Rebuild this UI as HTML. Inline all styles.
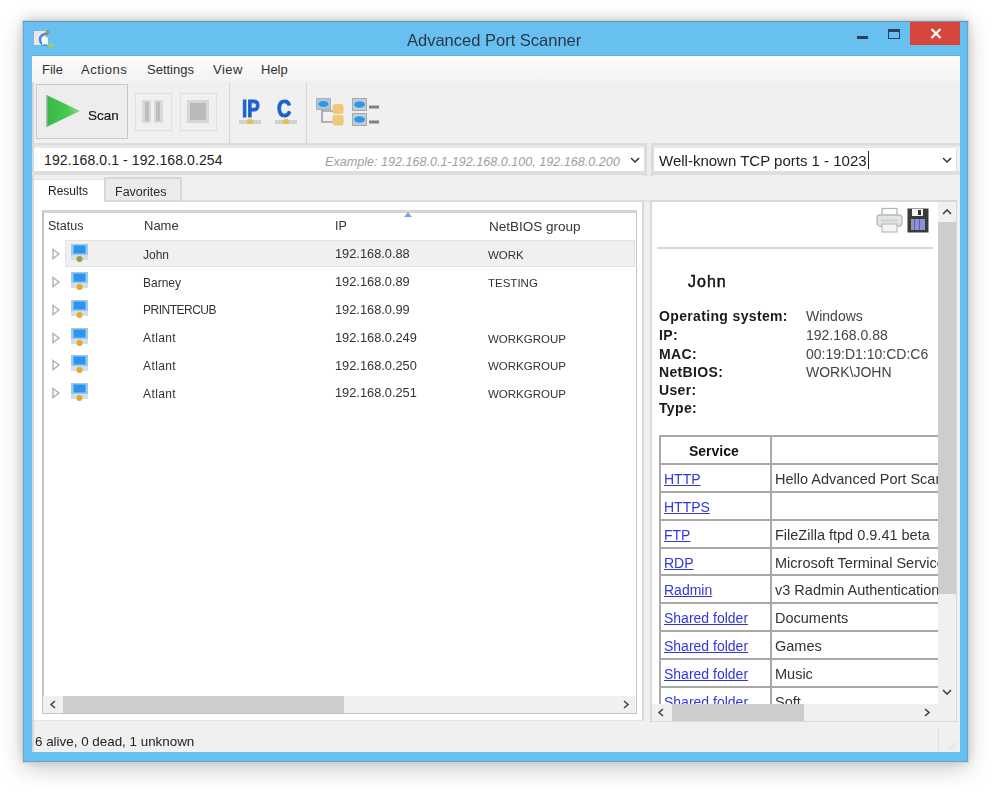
<!DOCTYPE html>
<html><head><meta charset="utf-8">
<style>
*{box-sizing:border-box;margin:0;padding:0}
html,body{width:1000px;height:794px;overflow:hidden;background:#fff;font-family:"Liberation Sans",sans-serif;color:#1e1e1e}
.a{position:absolute}
.t{position:absolute;white-space:pre;line-height:1}
#win{left:23px;top:21px;width:945px;height:741px;background:#68c0f0;box-shadow:0 0 0 1px rgba(215,205,195,0.9),0 6px 22px rgba(0,0,0,0.22),0 0 10px rgba(0,0,0,0.08),0 -4px 12px rgba(80,60,40,0.10);border:1px solid #62a6d2;border-top-color:#5a9cc8}
#client{left:32px;top:56px;width:928px;height:696px;background:#f0f0f0}
.menu{font-size:13px;color:#303030;top:63px}
.row{font-size:12px;color:#333}
.lbl{font-size:14px;font-weight:bold;color:#1a1a1a;letter-spacing:.35px}
.val{font-size:14px;color:#444}
.lnk{color:#3236e0;text-decoration:underline;font-size:14px}
.cel{font-size:14.5px;color:#333}
</style></head><body><div id="wrap" style="filter:blur(0.4px);position:absolute;left:0;top:0;width:1000px;height:794px">
<div id="win" class="a"></div>
<!-- title bar -->
<svg class="a" style="left:33px;top:28px" width="22" height="22" viewBox="0 0 22 22">
  <rect x="1" y="3" width="12" height="14" fill="#efe6ea"/>
  <path d="M15 5.5 Q7 6 7 11.5 Q7 17 14 17" stroke="#4a88da" stroke-width="2.4" fill="none"/>
  <rect x="9" y="9.5" width="6" height="7" fill="#eefdff"/>
  <circle cx="14.5" cy="4.3" r="2" fill="#a89838"/>
  <circle cx="18" cy="17" r="2.5" fill="#b4c858"/>
</svg>
<div class="t" style="left:407px;top:31.7px;font-size:16.5px;color:#283848">Advanced Port Scanner</div>
<div class="a" style="left:857px;top:36px;width:11px;height:3px;background:#2a4058"></div>
<div class="a" style="left:888px;top:29px;width:12px;height:10px;border:1.5px solid #2a4058;border-top-width:3px"></div>
<div class="a" style="left:910px;top:22px;width:50px;height:23px;background:#d7463c"></div>
<svg class="a" style="left:929px;top:27px" width="14" height="13" viewBox="0 0 14 13"><path d="M2.5 2 L11.5 11 M11.5 2 L2.5 11" stroke="#fff" stroke-width="2.2"/></svg>

<div id="client" class="a"></div>
<div class="a" style="left:32px;top:82px;width:2px;height:670px;background:#d4d8dc"></div>
<!-- menu bar -->
<div class="a" style="left:32px;top:55px;width:928px;height:1px;background:#5aaee0"></div>
<div class="a" style="left:32px;top:56px;width:928px;height:26px;background:linear-gradient(#fcfcfc,#f3f3f3)"></div>
<div class="t menu" style="left:42px">File</div>
<div class="t menu" style="left:81px;letter-spacing:.5px">Actions</div>
<div class="t menu" style="left:147px">Settings</div>
<div class="t menu" style="left:213px;letter-spacing:.5px">View</div>
<div class="t menu" style="left:261px">Help</div>

<!-- toolbar -->
<div class="a" style="left:36px;top:84px;width:92px;height:55px;background:#ededed;border:1px solid #c9c9c9"></div>
<svg class="a" style="left:46px;top:94px" width="36" height="34" viewBox="0 0 36 34"><defs><linearGradient id="gg" x1="0" x2="1"><stop offset="0" stop-color="#38b845"/><stop offset="0.6" stop-color="#48c850"/><stop offset="1" stop-color="#8ad88a"/></linearGradient></defs><path d="M1.5 1.5 L34 17 L1.5 32.5 Z" fill="url(#gg)"/><path d="M1 1 V33" stroke="#7a9a80" stroke-width="1.2"/></svg>
<div class="t" style="left:88px;top:108.5px;font-size:13.5px;color:#1a1a1a;-webkit-text-stroke:.2px #1a1a1a">Scan</div>
<div class="a" style="left:135px;top:93px;width:37px;height:38px;border:1px solid #e0e0e0"></div>
<div class="a" style="left:142px;top:100px;width:9px;height:23px;background:#bdbdbd;border:2px solid #dadada;border-left-width:3px"></div>
<div class="a" style="left:154px;top:100px;width:9px;height:23px;background:#bdbdbd;border:2px solid #dadada;border-right-width:3px"></div>
<div class="a" style="left:180px;top:93px;width:37px;height:38px;border:1px solid #e0e0e0"></div>
<div class="a" style="left:187px;top:100px;width:22px;height:23px;background:#bababa;border:3px solid #d6d6d6"></div>
<div class="a" style="left:229px;top:82px;width:1px;height:61px;background:#d6d6d6"></div>
<div class="a" style="left:306px;top:82px;width:1px;height:61px;background:#d6d6d6"></div>
<!-- IP icon -->
<div class="t" style="left:242px;top:97px;font-size:24px;font-weight:bold;color:#1a62d2;-webkit-text-stroke:1.1px #1a62d2;transform:scaleX(0.78);transform-origin:0 0">IP</div>
<div class="a" style="left:239px;top:120px;width:22px;height:4px;background:#d0d0d0"></div>
<div class="a" style="left:247px;top:119px;width:6px;height:5px;border-radius:3px;background:#e8c040"></div>
<div class="t" style="left:277px;top:97px;font-size:24px;font-weight:bold;color:#1a62d2;-webkit-text-stroke:1.1px #1a62d2;transform:scaleX(0.82);transform-origin:0 0">C</div>
<div class="a" style="left:275px;top:120px;width:22px;height:4px;background:#d0d0d0"></div>
<div class="a" style="left:283px;top:119px;width:6px;height:5px;border-radius:3px;background:#e8c040"></div>
<!-- tree icon -->
<svg class="a" style="left:315px;top:97px" width="32" height="32" viewBox="0 0 32 32">
  <rect x="1.5" y="1.5" width="14" height="11" fill="#b0c4d8" stroke="#a8b4c0" stroke-width="1"/>
  <ellipse cx="8.5" cy="7" rx="5" ry="3" fill="#2a9ae8"/>
  <path d="M7 12.5 V25 H18 M7 14 H18" stroke="#a0a0a0" stroke-width="1.6" fill="none"/>
  <rect x="17.5" y="7" width="11" height="10" rx="2.5" fill="#f0c878"/>
  <rect x="17.5" y="18" width="11" height="10.5" rx="2.5" fill="#f0c878"/>
</svg>
<!-- list icon -->
<svg class="a" style="left:351px;top:97px" width="32" height="32" viewBox="0 0 32 32">
  <rect x="1.5" y="1.5" width="14" height="12" fill="#c0ccd8" stroke="#a8a8a8" stroke-width="1"/>
  <ellipse cx="8.5" cy="7.5" rx="5.5" ry="3.2" fill="#2a9ae8"/>
  <rect x="1.5" y="16.5" width="14" height="12" fill="#c0ccd8" stroke="#a8a8a8" stroke-width="1"/>
  <ellipse cx="8.5" cy="22.5" rx="5.5" ry="3.2" fill="#2a9ae8"/>
  <rect x="18" y="8.5" width="10" height="3" fill="#808080"/>
  <rect x="18" y="23.5" width="10" height="3" fill="#808080"/>
</svg>
<div class="a" style="left:32px;top:143px;width:928px;height:3px;background:#dedede"></div>
<div class="a" style="left:32px;top:171px;width:928px;height:4px;background:#dedede"></div>
<div class="a" style="left:644px;top:143px;width:10px;height:33px;background:#ececec;border-left:3px solid #dcdcdc;border-right:3px solid #dcdcdc"></div>

<!-- address combo -->
<div class="a" style="left:34px;top:147px;width:610px;height:24px;background:#fff;border-top:1px solid #e6e6e6"></div>
<div class="t" style="left:44px;top:153px;font-size:14px;letter-spacing:.1px;color:#222">192.168.0.1 - 192.168.0.254</div>
<div class="t" style="left:325px;top:155.5px;font-size:12.6px;font-style:italic;color:#a0a0a0">Example: 192.168.0.1-192.168.0.100, 192.168.0.200</div>
<svg class="a" style="left:630px;top:157px" width="10" height="7" viewBox="0 0 10 7"><path d="M1 1 L5 5 L9 1" stroke="#333" stroke-width="1.5" fill="none"/></svg>
<!-- port combo -->
<div class="a" style="left:654px;top:147px;width:303px;height:24px;background:#fff;border-top:1px solid #e6e6e6;border-right:1px solid #e0e0e0"></div>
<div class="t" style="left:659px;top:153px;font-size:15px;color:#222">Well-known TCP ports 1 - 1023</div>
<div class="a" style="left:868px;top:151px;width:1px;height:18px;background:#222"></div>
<svg class="a" style="left:942px;top:157px" width="10" height="7" viewBox="0 0 10 7"><path d="M1 1 L5 5 L9 1" stroke="#333" stroke-width="1.5" fill="none"/></svg>

<!-- tabs -->
<div class="a" style="left:34px;top:200px;width:610px;height:521px;background:#fff;border-top:2px solid #dcdcdc;border-right:2px solid #d8d8d8;border-bottom:1px solid #e6e6e6"></div>
<div class="a" style="left:34px;top:179px;width:71px;height:23px;background:#fff;border-top:1px solid #e4e4e4"></div>
<div class="t" style="left:48px;top:185px;font-size:12px;color:#222">Results</div>
<div class="a" style="left:104px;top:177px;width:78px;height:25px;background:#ebebeb;border:2px solid #d8d8d8"></div>
<div class="t" style="left:115px;top:186px;font-size:12.5px;color:#2a2a2a">Favorites</div>

<!-- list -->
<div class="a" style="left:42px;top:210px;width:595px;height:504px;background:#fff;border:1px solid #c4c4c4;border-top:3px solid #d4d4d4;border-left:2px solid #bcc4cc"></div>
<div class="t row" style="left:48px;top:220px;font-size:12.5px">Status</div>
<div class="t row" style="left:144px;top:219px;font-size:13px">Name</div>
<div class="t row" style="left:335px;top:220px;font-size:12.5px">IP</div>
<div class="t row" style="left:489px;top:220px;font-size:13.5px">NetBIOS group</div>
<div class="a" style="left:404px;top:212px;width:8px;height:5px;background:#74a8e0;clip-path:polygon(50% 0,100% 100%,0 100%)"></div>
<!-- row highlight -->
<div class="a" style="left:65px;top:240px;width:570px;height:27px;background:#f0f0f0;border:1px solid #e2e2e2"></div>
<svg class="a" style="left:51px;top:248.2px" width="10" height="12" viewBox="0 0 10 12"><path d="M2 1.5 L8 6 L2 10.5 Z" fill="none" stroke="#b0b0b0" stroke-width="1.4"/></svg>
<svg class="a" style="left:70px;top:243.2px" width="19" height="20" viewBox="0 0 19 20"><rect x="1" y="1" width="17" height="11" fill="#9cc8ec"/><rect x="3.5" y="2.5" width="12" height="8" fill="#2a96f0"/><rect x="1" y="12" width="17" height="5" fill="#d4deea"/><circle cx="9.5" cy="16" r="3" fill="#a89a40"/></svg>
<div class="t row" style="left:143px;top:248.7px">John</div>
<div class="t row" style="left:335px;top:248.4px;font-size:12.8px">192.168.0.88</div>
<div class="t row" style="left:488px;top:250.2px;font-size:11.5px">WORK</div>
<svg class="a" style="left:51px;top:276.0px" width="10" height="12" viewBox="0 0 10 12"><path d="M2 1.5 L8 6 L2 10.5 Z" fill="none" stroke="#b0b0b0" stroke-width="1.4"/></svg>
<svg class="a" style="left:70px;top:271.0px" width="19" height="20" viewBox="0 0 19 20"><rect x="1" y="1" width="17" height="11" fill="#9cc8ec"/><rect x="3.5" y="2.5" width="12" height="8" fill="#2a96f0"/><rect x="1" y="12" width="17" height="5" fill="#d4deea"/><circle cx="9.5" cy="16" r="3" fill="#e8a828"/></svg>
<div class="t row" style="left:143px;top:276.5px">Barney</div>
<div class="t row" style="left:335px;top:276.2px;font-size:12.8px">192.168.0.89</div>
<div class="t row" style="left:488px;top:278.0px;font-size:11.5px">TESTING</div>
<svg class="a" style="left:51px;top:303.8px" width="10" height="12" viewBox="0 0 10 12"><path d="M2 1.5 L8 6 L2 10.5 Z" fill="none" stroke="#b0b0b0" stroke-width="1.4"/></svg>
<svg class="a" style="left:70px;top:298.8px" width="19" height="20" viewBox="0 0 19 20"><rect x="1" y="1" width="17" height="11" fill="#9cc8ec"/><rect x="3.5" y="2.5" width="12" height="8" fill="#2a96f0"/><rect x="1" y="12" width="17" height="5" fill="#d4deea"/><circle cx="9.5" cy="16" r="3" fill="#e8a828"/></svg>
<div class="t row" style="left:143px;top:304.3px;letter-spacing:-0.5px">PRINTERCUB</div>
<div class="t row" style="left:335px;top:304.0px;font-size:12.8px">192.168.0.99</div>
<svg class="a" style="left:51px;top:331.6px" width="10" height="12" viewBox="0 0 10 12"><path d="M2 1.5 L8 6 L2 10.5 Z" fill="none" stroke="#b0b0b0" stroke-width="1.4"/></svg>
<svg class="a" style="left:70px;top:326.6px" width="19" height="20" viewBox="0 0 19 20"><rect x="1" y="1" width="17" height="11" fill="#9cc8ec"/><rect x="3.5" y="2.5" width="12" height="8" fill="#2a96f0"/><rect x="1" y="12" width="17" height="5" fill="#d4deea"/><circle cx="9.5" cy="16" r="3" fill="#e8a828"/></svg>
<div class="t row" style="left:143px;top:332.1px;letter-spacing:0.4px">Atlant</div>
<div class="t row" style="left:335px;top:331.8px;font-size:12.8px">192.168.0.249</div>
<div class="t row" style="left:488px;top:333.6px;font-size:11.5px">WORKGROUP</div>
<svg class="a" style="left:51px;top:359.4px" width="10" height="12" viewBox="0 0 10 12"><path d="M2 1.5 L8 6 L2 10.5 Z" fill="none" stroke="#b0b0b0" stroke-width="1.4"/></svg>
<svg class="a" style="left:70px;top:354.4px" width="19" height="20" viewBox="0 0 19 20"><rect x="1" y="1" width="17" height="11" fill="#9cc8ec"/><rect x="3.5" y="2.5" width="12" height="8" fill="#2a96f0"/><rect x="1" y="12" width="17" height="5" fill="#d4deea"/><circle cx="9.5" cy="16" r="3" fill="#e8a828"/></svg>
<div class="t row" style="left:143px;top:359.9px;letter-spacing:0.4px">Atlant</div>
<div class="t row" style="left:335px;top:359.6px;font-size:12.8px">192.168.0.250</div>
<div class="t row" style="left:488px;top:361.4px;font-size:11.5px">WORKGROUP</div>
<svg class="a" style="left:51px;top:387.2px" width="10" height="12" viewBox="0 0 10 12"><path d="M2 1.5 L8 6 L2 10.5 Z" fill="none" stroke="#b0b0b0" stroke-width="1.4"/></svg>
<svg class="a" style="left:70px;top:382.2px" width="19" height="20" viewBox="0 0 19 20"><rect x="1" y="1" width="17" height="11" fill="#9cc8ec"/><rect x="3.5" y="2.5" width="12" height="8" fill="#2a96f0"/><rect x="1" y="12" width="17" height="5" fill="#d4deea"/><circle cx="9.5" cy="16" r="3" fill="#e8a828"/></svg>
<div class="t row" style="left:143px;top:387.7px;letter-spacing:0.4px">Atlant</div>
<div class="t row" style="left:335px;top:387.4px;font-size:12.8px">192.168.0.251</div>
<div class="t row" style="left:488px;top:389.2px;font-size:11.5px">WORKGROUP</div>

<!-- left hscroll -->
<div class="a" style="left:43px;top:696px;width:592px;height:17px;background:#f0f0f0"></div>
<div class="a" style="left:63px;top:696px;width:281px;height:17px;background:#cdcdcd"></div>
<svg class="a" style="left:49px;top:700px" width="8" height="9" viewBox="0 0 8 9"><path d="M6 1 L2 4.5 L6 8" stroke="#444" stroke-width="1.6" fill="none"/></svg>
<svg class="a" style="left:622px;top:700px" width="8" height="9" viewBox="0 0 8 9"><path d="M2 1 L6 4.5 L2 8" stroke="#444" stroke-width="1.6" fill="none"/></svg>

<div class="a" style="left:644px;top:200px;width:7px;height:2px;background:#e2e2e2"></div>
<!-- right panel -->
<div class="a" style="left:650px;top:200px;width:307px;height:522px;background:#fff;border:2px solid #d8d8d8"></div>
<div class="a" style="left:652px;top:202px;width:286px;height:502px;overflow:hidden;background:#fff">
<svg class="a" style="left:224px;top:5px" width="27" height="27" viewBox="0 0 27 27">
<rect x="6" y="1.5" width="15" height="7" fill="#fff" stroke="#b4b4b4" stroke-width="1.3"/>
<rect x="1" y="8" width="25" height="11" rx="3" fill="#e4e4e4" stroke="#b8b8b8" stroke-width="1.3"/>
<rect x="5" y="12" width="17" height="3" fill="#cdd8de"/>
<rect x="6" y="17" width="15" height="8" fill="#f4f4f4" stroke="#bdbdbd" stroke-width="1.2"/>
</svg>
<svg class="a" style="left:255px;top:6px" width="22" height="25" viewBox="0 0 22 25">
<rect x="0.5" y="0.5" width="21" height="24" fill="#3a3a3a"/>
<rect x="5" y="1" width="11" height="7" fill="#f4f4f4"/>
<rect x="11" y="2" width="3" height="5" fill="#333"/>
<rect x="4" y="11" width="14" height="11" fill="#8c92d4"/>
<rect x="7" y="11" width="1" height="11" fill="#5a60a8"/>
<rect x="12" y="11" width="1" height="11" fill="#5a60a8"/>
</svg>
<div class="a" style="left:5px;top:45px;width:276px;height:2px;background:#d6d6d6"></div>
<div class="t" style="left:36px;top:72px;font-size:16px;letter-spacing:1px;-webkit-text-stroke:.45px #111;color:#111">John</div>
<div class="t lbl" style="left:7px;top:107.0px">Operating system:</div>
<div class="t val" style="left:154px;top:107.30000000000001px">Windows</div>
<div class="t lbl" style="left:7px;top:125.69999999999999px">IP:</div>
<div class="t val" style="left:154px;top:126px">192.168.0.88</div>
<div class="t lbl" style="left:7px;top:144.7px">MAC:</div>
<div class="t val" style="left:154px;top:145px">00:19:D1:10:CD:C6</div>
<div class="t lbl" style="left:7px;top:162.7px">NetBIOS:</div>
<div class="t val" style="left:154px;top:163px">WORK\JOHN</div>
<div class="t lbl" style="left:7px;top:180.7px">User:</div>
<div class="t lbl" style="left:7px;top:199.2px">Type:</div>
<div class="a" style="left:7px;top:234px;width:300px;height:300px;border-left:2px solid #a8a8a8"></div>
<div class="a" style="left:118px;top:234px;width:2px;height:300px;background:#a8a8a8"></div>
<div class="a" style="left:7px;top:233px;width:300px;height:2px;background:#a8a8a8"></div>
<div class="a" style="left:7px;top:261px;width:300px;height:2px;background:#a8a8a8"></div>
<div class="a" style="left:7px;top:289px;width:300px;height:2px;background:#a8a8a8"></div>
<div class="a" style="left:7px;top:317px;width:300px;height:2px;background:#a8a8a8"></div>
<div class="a" style="left:7px;top:345px;width:300px;height:2px;background:#a8a8a8"></div>
<div class="a" style="left:7px;top:372px;width:300px;height:2px;background:#a8a8a8"></div>
<div class="a" style="left:7px;top:400px;width:300px;height:2px;background:#a8a8a8"></div>
<div class="a" style="left:7px;top:428px;width:300px;height:2px;background:#a8a8a8"></div>
<div class="a" style="left:7px;top:456px;width:300px;height:2px;background:#a8a8a8"></div>
<div class="a" style="left:7px;top:484px;width:300px;height:2px;background:#a8a8a8"></div>
<div class="a" style="left:7px;top:511px;width:300px;height:2px;background:#a8a8a8"></div>
<div class="t" style="left:37px;top:241.89999999999998px;font-size:14px;font-weight:bold;color:#111">Service</div>
<div class="t lnk" style="left:12px;top:270.2px">HTTP</div>
<div class="t cel" style="left:123px;top:270.2px">Hello Advanced Port Scanner</div>
<div class="t lnk" style="left:12px;top:298.0px">HTTPS</div>
<div class="t lnk" style="left:12px;top:325.8px">FTP</div>
<div class="t cel" style="left:123px;top:325.8px">FileZilla ftpd 0.9.41 beta</div>
<div class="t lnk" style="left:12px;top:353.6px">RDP</div>
<div class="t cel" style="left:123px;top:353.6px">Microsoft Terminal Services</div>
<div class="t lnk" style="left:12px;top:381.4px">Radmin</div>
<div class="t cel" style="left:123px;top:381.4px">v3 Radmin Authentication</div>
<div class="t lnk" style="left:12px;top:409.2px">Shared folder</div>
<div class="t cel" style="left:123px;top:409.2px">Documents</div>
<div class="t lnk" style="left:12px;top:437.0px">Shared folder</div>
<div class="t cel" style="left:123px;top:437.0px">Games</div>
<div class="t lnk" style="left:12px;top:464.8px">Shared folder</div>
<div class="t cel" style="left:123px;top:464.8px">Music</div>
<div class="t lnk" style="left:12px;top:492.6px">Shared folder</div>
<div class="t cel" style="left:123px;top:492.6px">Soft</div>
</div>
<div class="a" style="left:938px;top:202px;width:18px;height:502px;background:#f0f0f0"></div>
<div class="a" style="left:938px;top:222px;width:18px;height:372px;background:#cdcdcd"></div>
<svg class="a" style="left:942px;top:208px" width="10" height="8" viewBox="0 0 10 8"><path d="M1 6 L5 2 L9 6" stroke="#444" stroke-width="1.6" fill="none"/></svg>
<svg class="a" style="left:942px;top:688px" width="10" height="8" viewBox="0 0 10 8"><path d="M1 2 L5 6 L9 2" stroke="#444" stroke-width="1.6" fill="none"/></svg>
<div class="a" style="left:652px;top:704px;width:286px;height:17px;background:#f0f0f0"></div>
<div class="a" style="left:672px;top:704px;width:132px;height:17px;background:#cdcdcd"></div>
<svg class="a" style="left:657px;top:708px" width="8" height="9" viewBox="0 0 8 9"><path d="M6 1 L2 4.5 L6 8" stroke="#444" stroke-width="1.6" fill="none"/></svg>
<svg class="a" style="left:923px;top:708px" width="8" height="9" viewBox="0 0 8 9"><path d="M2 1 L6 4.5 L2 8" stroke="#444" stroke-width="1.6" fill="none"/></svg>
<div class="a" style="left:938px;top:704px;width:18px;height:17px;background:#f0f0f0"></div>

<!-- status bar -->
<div class="a" style="left:938px;top:728px;width:1px;height:22px;background:#dedede"></div>
<svg class="a" style="left:944px;top:738px" width="14" height="13" viewBox="0 0 14 13"><path d="M12 2 V12 H2 Z" fill="#e9e9e9"/></svg>
<div class="t" style="left:35px;top:734.5px;font-size:13.4px;color:#222">6 alive, 0 dead, 1 unknown</div>
</div></body></html>
